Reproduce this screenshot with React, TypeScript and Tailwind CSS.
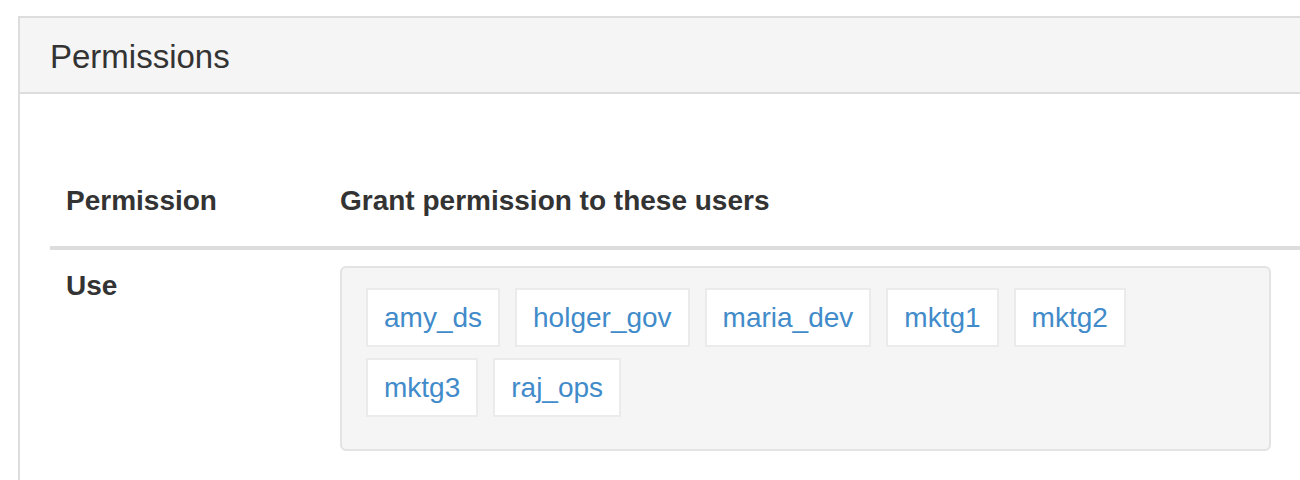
import React from 'react';

const users = ['amy_ds', 'holger_gov', 'maria_dev', 'mktg1', 'mktg2', 'mktg3', 'raj_ops'];

const UserTag: React.FC<{ name: string }> = ({ name }) => (
  <a href="#" className="block bg-white border-2 border-[#ebebeb] px-[16px] py-[7px] leading-[41px] text-[28px] text-[#428bca] no-underline">
    {name}
  </a>
);

const App: React.FC = () => {
  return (
    <div className="w-[1300px] h-[480px] overflow-hidden bg-white pl-[18px] pt-[16px] font-['Liberation_Sans',Arial,sans-serif] text-[#333]">
      <div className="w-[1340px] border-2 border-[#dddddd] bg-white">
        <div className="bg-[#f5f5f5] border-b-2 border-[#dddddd] pl-[30px] pt-[21px] pb-[18px]">
          <h3 className="text-[33px] leading-[35px] font-normal">Permissions</h3>
        </div>

        <div className="pl-[30px] pt-[71px] pb-[40px]">
          <table className="w-full border-collapse text-[28px] leading-[40px]">
            <thead>
              <tr>
                <th className="w-[274px] text-left font-bold px-[16px] pt-[16px] pb-[25px] border-b-4 border-[#dddddd]">Permission</th>
                <th className="text-left font-bold px-[16px] pt-[16px] pb-[25px] border-b-4 border-[#dddddd]">Grant permission to these users</th>
              </tr>
            </thead>
            <tbody>
              <tr>
                <td className="align-top font-bold px-[16px] py-[16px]">Use</td>
                <td className="align-top px-[16px] py-[16px]">
                  <div className="w-[931px] bg-[#f5f5f5] border-2 border-[#e3e3e3] rounded-[6px] pl-[24px] pr-[24px] pt-[20px] pb-[32px]">
                    <div className="flex flex-wrap gap-x-[15px] gap-y-[11px]">
                      {users.map(u => <UserTag key={u} name={u} />)}
                    </div>
                  </div>
                </td>
              </tr>
            </tbody>
          </table>
        </div>
      </div>
    </div>
  );
};

export default App;
